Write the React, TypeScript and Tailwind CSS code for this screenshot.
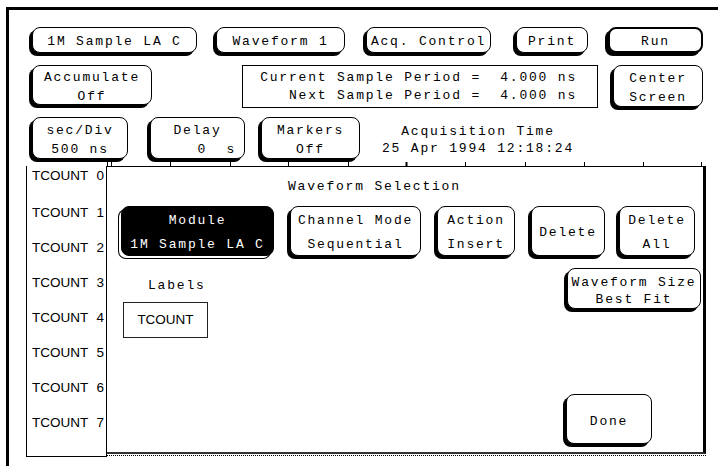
import clsx from 'clsx';
import type { ReactNode } from 'react';

const mono = "font-['Liberation_Mono','DejaVu_Sans_Mono',monospace] text-[13px] tracking-[1.8px]";

// HP-style softkey: thin outline, heavy shadow on the left and bottom
function Key({
  className,
  inverted,
  children,
}: {
  className?: string;
  inverted?: boolean;
  children: ReactNode;
}) {
  return (
    <div
      className={clsx(
        'flex shrink-0 flex-col items-center justify-center rounded-[8px] border pt-[4px]',
        inverted
          ? 'border-black bg-black text-white shadow-[-3px_3px_0_-1px_#fff,-3px_3px_0_0_#000]'
          : 'border-black bg-white text-black shadow-[-3px_3px_0_0_#000]',
        className
      )}
    >
      {children}
    </div>
  );
}

const labels = [0, 1, 2, 3, 4, 5, 6, 7];
const ticks = [0, 4, 63, 123, 181, 241, 299, 358, 418, 477, 536, 594];

export default function App() {
  return (
    <div className={clsx('relative h-[466px] w-[718px] overflow-hidden bg-white text-black', mono)}>
      <div className="ml-[6px] mt-[7px] h-[459px] border-l-[3px] border-t-[3px] border-black">
        {/* top row */}
        <div className="mt-[17px] flex h-[26px] leading-[22px]">
          <Key className="ml-[23px] w-[165px]">1M Sample LA C</Key>
          <Key className="ml-[19px] w-[129px]">Waveform 1</Key>
          <Key className="ml-[21px] w-[125px]">Acq. Control</Key>
          <Key className="ml-[25px] w-[72px]">Print</Key>
          <Key className="ml-[20px] w-[95px] border-2">Run</Key>
        </div>

        {/* second row */}
        <div className="mt-[12px] flex h-[43px] items-start leading-[19px]">
          <Key className="ml-[23px] h-[40px] w-[120px]">
            <span>Accumulate</span>
            <span>Off</span>
          </Key>
          <div className="ml-[90px] flex h-[43px] w-[356px] flex-col items-end border border-black pr-[20px] pt-[3px] leading-[18px] whitespace-pre">
            <span>Current Sample Period =  4.000 ns</span>
            <span>Next Sample Period =  4.000 ns</span>
          </div>
          <Key className="ml-[15px] h-[42px] w-[90px]">
            <span>Center</span>
            <span>Screen</span>
          </Key>
        </div>

        {/* third row */}
        <div className="mt-[9px] flex h-[42px] items-start leading-[19px]">
          <Key className="ml-[23px] h-[42px] w-[96px]">
            <span>sec/Div</span>
            <span>500 ns</span>
          </Key>
          <Key className="ml-[22px] h-[42px] w-[95px]">
            <span>Delay</span>
            <span className="self-end pr-[8px] whitespace-pre">0  s</span>
          </Key>
          <Key className="ml-[16px] h-[42px] w-[99px]">
            <span>Markers</span>
            <span>Off</span>
          </Key>
          <div className="ml-[18px] flex w-[200px] flex-col items-center pt-[6px] leading-[17px]">
            <span>Acquisition Time</span>
            <span>25 Apr 1994 12:18:24</span>
          </div>
        </div>

        {/* waveform area */}
        <div className="mt-[3px] flex">
          <div className="ml-[17px] mt-[4px] h-[291px] w-[81px] overflow-hidden border-x border-b border-black font-['Liberation_Sans',Arial,sans-serif] text-[13.5px] tracking-normal">
            <div className="-mt-[5px]">
              {labels.map((n) => (
                <div
                  key={n}
                  className={clsx(
                    'flex h-[35px] items-center justify-between pl-[5px] pr-[2px]',
                    n === 0 && 'pb-[4px]'
                  )}
                >
                  <span>TCOUNT</span>
                  <span>{n}</span>
                </div>
              ))}
            </div>
          </div>

          <div className="flex w-[599px] flex-col">
            <svg width="599" height="5" className="block">
              <line x1="0" y1="4.5" x2="599" y2="4.5" stroke="#000" />
              {ticks.map((x) => (
                <line
                  key={x}
                  x1={x + 0.5}
                  y1="0"
                  x2={x + 0.5}
                  y2="4"
                  stroke="#000"
                  strokeWidth={x === 299 ? 2 : 1}
                />
              ))}
            </svg>

            <div className="flex h-[287px] flex-col border-r-[3px] border-b-2 border-black border-b-[#333]">
              <div className="pl-[181px] pt-[11px] leading-[18px]">Waveform Selection</div>

              <div className="mt-[10px] flex h-[50px] leading-[24px]">
                <Key inverted className="ml-[14px] w-[153px]">
                  <span>Module</span>
                  <span>1M Sample LA C</span>
                </Key>
                <Key className="ml-[16px] w-[131px]">
                  <span>Channel Mode</span>
                  <span>Sequential</span>
                </Key>
                <Key className="ml-[16px] w-[78px]">
                  <span>Action</span>
                  <span>Insert</span>
                </Key>
                <Key className="ml-[16px] w-[74px]">Delete</Key>
                <Key className="ml-[14px] w-[76px]">
                  <span>Delete</span>
                  <span>All</span>
                </Key>
              </div>

              <div className="mt-[12px] flex">
                <div className="flex flex-col items-start">
                  <span className="ml-[41px] mt-[9px] leading-[18px]">Labels</span>
                  <div className="ml-[16px] mt-[7px] flex h-[36px] w-[85px] items-center justify-center border border-[#222] font-['Liberation_Sans',Arial,sans-serif] text-[13.5px] tracking-normal">
                    TCOUNT
                  </div>
                </div>
                <div className="ml-auto mr-[2px] flex flex-col items-start leading-[17px]">
                  <Key className="h-[41px] w-[134px]">
                    <span>Waveform Size</span>
                    <span>Best Fit</span>
                  </Key>
                  <Key className="ml-[-1px] mt-[85px] h-[50px] w-[86px]">Done</Key>
                </div>
              </div>
            </div>
            <div className="mt-[1px] w-[599px] border-t border-dotted border-black" />
          </div>
        </div>
      </div>
    </div>
  );
}
